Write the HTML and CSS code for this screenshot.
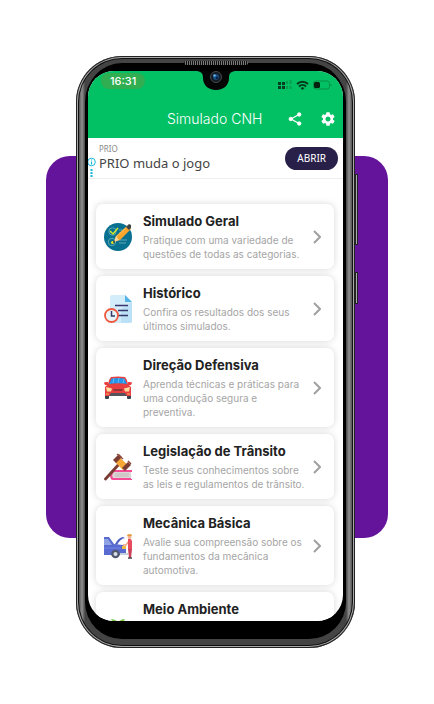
FILE: index.html
```
<!DOCTYPE html>
<html lang="pt-BR">
<head>
    <meta charset="UTF-8">
    <meta name="viewport" content="width=device-width, initial-scale=1.0">
    <title>Simulado CNH</title>
    <link rel="stylesheet" href="styles.css">
</head>
<body>
    <div class="stage">
        <div class="backdrop"></div>
        <div class="phone">
            <span class="speaker"></span>
            <span class="side-key volume"></span>
            <span class="side-key power"></span>
            <div class="bezel">
                <main class="screen">
                    <svg class="notch" viewBox="0 0 42 20">
                        <path d="M0 0C6 0 8 2 8 7C8 14 13 19 21 19S34 14 34 7C34 2 36 0 42 0Z" fill="#050505"/>
                        <circle cx="21" cy="6" r="5.5" fill="#141a22" stroke="#46494f"/>
                        <circle cx="21" cy="6" r="3" fill="#164b80"/>
                        <circle cx="19.5" cy="4.5" r="1.2" fill="#65b5ee"/>
                        <circle cx="22" cy="7" r="1" fill="#07101f"/>
                    </svg>

                    <header class="app-header">
                        <div class="status-bar">
                            <span class="time">16:31</span>
                            <svg class="status-icons" viewBox="0 0 54 12">
                                <g fill="#073d20">
                                    <rect y="2" width="3" height="3"/><rect x="4" y="2" width="3" height="3"/>
                                    <rect y="6" width="3" height="3"/><rect x="4" y="6" width="3" height="3"/>
                                </g>
                                <g fill="#0a9d50">
                                    <rect x="8" y="1" width="2" height="3"/><rect x="8" y="6" width="2" height="3"/>
                                    <rect x="11.5" y="0" width="2" height="4"/><rect x="11.5" y="6" width="2" height="3"/>
                                </g>
                                <g fill="none" stroke="#06391d" stroke-width="2">
                                    <path d="M19 4C22 1 27 1 30 4"/>
                                    <path d="M21 6.5C23 4.5 26 4.5 28 6.5"/>
                                </g>
                                <path d="M22.5 8Q24.5 6.5 26.5 8L24.5 10Z" fill="#06391d"/>
                                <rect x="35.5" y="1" width="16" height="8" rx="2.5" fill="none" stroke="#079048"/>
                                <rect x="36" y="2" width="6" height="6" rx="1.5" fill="#04210f"/>
                                <path d="M53 4v2" stroke="#079048"/>
                            </svg>
                        </div>
                        <div class="toolbar">
                            <h1>Simulado CNH</h1>
                            <button class="icon-button" type="button" aria-label="Compartilhar">
                                <svg viewBox="0 0 14 14" fill="#fff" stroke="#fff">
                                    <path d="M11 2.5L3 7L11 11.5" fill="none" stroke-width="1.3"/>
                                    <circle cx="11.2" cy="2.5" r="1.7"/><circle cx="2.8" cy="7" r="1.7"/><circle cx="11.2" cy="11.5" r="1.7"/>
                                </svg>
                            </button>
                            <button class="icon-button" type="button" aria-label="Configurações">
                                <svg viewBox="2 2 20 20" fill="#fff">
                                    <path d="M19.14 12.94c.04-.3.06-.61.06-.94s-.02-.64-.07-.94l2.03-1.58c.18-.14.23-.41.12-.61l-1.92-3.32c-.12-.22-.37-.29-.59-.22l-2.39.96c-.5-.38-1.03-.7-1.62-.94l-.36-2.54c-.04-.24-.24-.41-.48-.41h-3.84c-.24 0-.43.17-.47.41l-.36 2.54c-.59.24-1.13.57-1.62.94l-2.39-.96c-.22-.08-.47 0-.59.22L2.74 8.87c-.12.21-.08.47.12.61l2.03 1.58c-.05.3-.09.63-.09.94s.02.64.07.94l-2.03 1.58c-.18.14-.23.41-.12.61l1.92 3.32c.12.22.37.29.59.22l2.39-.96c.5.38 1.03.7 1.62.94l.36 2.54c.05.24.24.41.48.41h3.84c.24 0 .44-.17.47-.41l.36-2.54c.59-.24 1.13-.56 1.62-.94l2.39.96c.22.08.47 0 .59-.22l1.92-3.32c.12-.22.07-.47-.12-.61l-2.01-1.58zM12 15.6c-1.98 0-3.6-1.62-3.6-3.6s1.62-3.6 3.6-3.6 3.6 1.62 3.6 3.6-1.62 3.6-3.6 3.6z"/>
                                </svg>
                            </button>
                        </div>
                    </header>

                    <section class="ad">
                        <svg class="ad-info" viewBox="0 0 8 20" fill="none" stroke="#18b5d8">
                            <circle cx="3.5" cy="5" r="3.8"/>
                            <path d="M3.5 4.5v3M3.5 2.5v1" stroke-width="1.2"/>
                            <path d="M3.5 12v2M3.5 15v2M3.5 18v2" stroke-width="2"/>
                        </svg>
                        <div class="ad-text">
                            <p class="ad-brand">PRIO</p>
                            <p class="ad-title">PRIO muda o jogo</p>
                        </div>
                        <button class="ad-button" type="button">ABRIR</button>
                    </section>

                    <nav class="menu">
                        <a class="card" href="#simulado">
                            <svg class="card-icon" viewBox="0 0 28 28">
                                <circle cx="14" cy="14" r="14" fill="#08718f"/>
                                <g fill="none" stroke="#5aa6b5">
                                    <circle cx="8.5" cy="8.5" r="3.7"/><circle cx="8" cy="19" r="3.7"/>
                                    <path d="M15 7h7M15 10h4M15 17h8M15 20h7"/>
                                </g>
                                <path d="M6 8l3 3 5-6" fill="none" stroke="#d5e926" stroke-width="1.5"/>
                                <circle cx="8.5" cy="19.5" r="1.5" fill="#e2de2b"/>
                                <path d="M10 19L12 13L23 3L27 6L16 17Z" fill="#f9a42b"/>
                                <path d="M12 14L24 3" stroke="#ffc75c"/>
                                <path d="M10 19L12 13L15 17Z" fill="#f8d8a0"/>
                                <path d="M22 4L25 1L27 2V5L25 7Z" fill="#3d4245"/>
                                <path d="M9 20l2-1-1-2z" fill="#263238"/>
                            </svg>
                            <div class="card-text">
                                <h2>Simulado Geral</h2>
                                <p>Pratique com uma variedade de questões de todas as categorias.</p>
                            </div>
                            <svg class="chevron" viewBox="0 0 8 14"><path d="M1 1l6 6-6 6"/></svg>
                        </a>

                        <a class="card" href="#historico">
                            <svg class="card-icon" viewBox="0 0 28 28">
                                <path d="M8 0h13l7 7v19a2 2 0 0 1-2 2H8a2 2 0 0 1-2-2V2a2 2 0 0 1 2-2z" fill="#d4edfb"/>
                                <path d="M17 14l11-7v19a2 2 0 0 1-2 2H17z" fill="#bce0f5"/>
                                <path d="M21 0l7 7h-7z" fill="#55b4e5"/>
                                <path d="M11 10.5h13M14 15.5h10M14 20.5h10" stroke="#36376b" stroke-width="1.5"/>
                                <circle cx="7.5" cy="20.5" r="6.5" fill="#e7f5fc" stroke="#f0593e" stroke-width="1.8"/>
                                <path d="M7.5 16v5h3.5" fill="none" stroke="#34386a" stroke-width="1.5"/>
                            </svg>
                            <div class="card-text">
                                <h2>Histórico</h2>
                                <p>Confira os resultados dos seus últimos simulados.</p>
                            </div>
                            <svg class="chevron" viewBox="0 0 8 14"><path d="M1 1l6 6-6 6"/></svg>
                        </a>

                        <a class="card" href="#direcao">
                            <svg class="card-icon" viewBox="0 0 28 28">
                                <path d="M1 19h4v5a1 1 0 0 1-1 1H2a1 1 0 0 1-1-1zM23 19h4v5a1 1 0 0 1-1 1h-2a1 1 0 0 1-1-1z" fill="#38434d"/>
                                <path d="M7 3Q14 2 21 3Q23 5 24 10L27 13V22H1V13L4 10Q5 5 7 3Z" fill="#e93f40"/>
                                <path d="M0 9q0-1 2-1h2v3H1zM28 9q0-1-2-1h-2v3h3z" fill="#e93f40"/>
                                <path d="M7.5 4.5Q14 3.5 20.5 4.5L23 10Q14 8.5 5 10Z" fill="#2196eb"/>
                                <path d="M10 4l-1 5M15 4l-1 5M20 5l-1 4" stroke="#68b9f1"/>
                                <path d="M2 13l6 1.5-1 3H3zM26 13l-6 1.5 1 3h4z" fill="#ffe0a0"/>
                                <path d="M9 15h10l-1 2h-8z" fill="#8e383b"/>
                                <path d="M7 19h14l2 3H5z" fill="#55535b"/>
                                <path d="M2 20h3M23 20h3" stroke="#f1b657"/>
                            </svg>
                            <div class="card-text">
                                <h2>Direção Defensiva</h2>
                                <p>Aprenda técnicas e práticas para uma condução segura e preventiva.</p>
                            </div>
                            <svg class="chevron" viewBox="0 0 8 14"><path d="M1 1l6 6-6 6"/></svg>
                        </a>

                        <a class="card" href="#legislacao">
                            <svg class="card-icon" viewBox="0 0 28 28">
                                <path d="M10 17H28v2h-1v7h1v1H9q-3 0-3-5t4-5z" fill="#f64996"/>
                                <path d="M10 19h17v6H9q-2-3 1-6z" fill="#ddd5d5"/>
                                <path d="M11 21h14M11 23h14" stroke="#c2baba"/>
                                <path d="M1.5 26L16 10" stroke="#793d34" stroke-width="2.8" stroke-linecap="round"/>
                                <path d="M15 4L24 12L19 17L11 9Z" fill="#f6a735"/>
                                <path d="M15 1L18 4L12 10L9 7Z" fill="#793d34"/>
                                <path d="M24 9L27 12L21 18L18 15Z" fill="#793d34"/>
                                <path d="M13 1l6 5M24 8l3 3" stroke="#934a3d" stroke-width="1.5"/>
                            </svg>
                            <div class="card-text">
                                <h2>Legislação de Trânsito</h2>
                                <p>Teste seus conhecimentos sobre as leis e regulamentos de trânsito.</p>
                            </div>
                            <svg class="chevron" viewBox="0 0 8 14"><path d="M1 1l6 6-6 6"/></svg>
                        </a>

                        <a class="card" href="#mecanica">
                            <svg class="card-icon" viewBox="0 0 28 28">
                                <path d="M0 5h5l5 7 9 1 3 3v7H0z" fill="#596bd0"/>
                                <path d="M0 7h4l4 6H0z" fill="#8fa3e4"/>
                                <path d="M11 12q3-6 8-7l2 1q-5 1-8 7z" fill="#5162c4"/>
                                <path d="M0 16h17" stroke="#7385e6"/>
                                <path d="M18 14h4v3h-4z" fill="#f0bd42"/>
                                <path d="M16 21h8v2h-8z" fill="#c6d0dd"/>
                                <circle cx="11.5" cy="22" r="4.3" fill="#52596e"/><circle cx="11.5" cy="22" r="2" fill="#d6dee8"/>
                                <path d="M25 9l-3 4h-3" fill="none" stroke="#f1a183" stroke-width="1.5"/>
                                <path d="M24 7q3-1 4 2v9h-4z" fill="#e84b5b"/>
                                <path d="M24 17h4l-1 9h-2z" fill="#ca4056"/>
                                <circle cx="25.5" cy="5" r="2" fill="#f3b18e"/>
                                <path d="M23 4q0-2 3-2 2 0 2 2z" fill="#e59c38"/>
                                <path d="M24 26h4" stroke="#4b4654" stroke-width="1.5"/>
                            </svg>
                            <div class="card-text">
                                <h2>Mecânica Básica</h2>
                                <p>Avalie sua compreensão sobre os fundamentos da mecânica automotiva.</p>
                            </div>
                            <svg class="chevron" viewBox="0 0 8 14"><path d="M1 1l6 6-6 6"/></svg>
                        </a>

                        <a class="card card-last" href="#ambiente">
                            <svg class="card-icon" viewBox="0 0 28 28">
                                <circle cx="14" cy="17" r="11" fill="#3aa5dc"/>
                                <path d="M14 4Q11 1 7 1Q9 6 14 5Q19 6 21 1Q17 1 14 4Z" fill="#79c943"/>
                                <path d="M14 5v9" stroke="#248a4b" stroke-width="2"/>
                            </svg>
                            <div class="card-text">
                                <h2>Meio Ambiente</h2>
                            </div>
                            <svg class="chevron" viewBox="0 0 8 14"><path d="M1 1l6 6-6 6"/></svg>
                        </a>
                    </nav>
                </main>
            </div>
        </div>
    </div>
</body>
</html>
```

FILE: styles.css
```
* {
    margin: 0;
    padding: 0;
    box-sizing: border-box;
}

body {
    background: #fff;
    font-family: Inter, "Liberation Sans", sans-serif;
}

/* phone and purple panel share one grid cell */
.stage {
    display: grid;
    max-width: 434px;
    margin: 0 auto;
    padding: 56px 46px;
}

.backdrop,
.phone {
    grid-area: 1 / 1;
}

.backdrop {
    margin: 100px 0 110px;
    border-radius: 24px;
    background: #64149b;
}

.phone {
    position: relative;
    margin: 0 33px 0 30px;
    padding: 3px;
    border-radius: 46px;
    background: #111;
    box-shadow: inset 0 0 0 1px #222, inset 0 0 0 2px #aaa;
}

.bezel {
    padding: 8px 3px 18px;
    border: 6px solid transparent;
    border-top-width: 4px;
    border-radius: 43px;
    background:
        linear-gradient(#000, #000) padding-box,
        linear-gradient(90deg, #555, #909090 3px, #444 6px, #444 calc(100% - 6px), #909090 calc(100% - 3px), #555) border-box;
}

.speaker {
    position: absolute;
    top: 5px;
    left: 50%;
    width: 64px;
    height: 4px;
    border-radius: 2px;
    background: repeating-linear-gradient(90deg, #111 0 1px, #777 1px 2px);
    transform: translateX(-50%);
}

.side-key {
    position: absolute;
    right: -3px;
    width: 3px;
    border: 1px solid #222;
    background: #aaa;
}

.volume {
    top: 118px;
    height: 71px;
}

.power {
    top: 216px;
    height: 32px;
}

.screen {
    position: relative;
    overflow: hidden;
    aspect-ratio: 255 / 550;
    border-radius: 26px;
    background: #fff;
}

.notch {
    position: absolute;
    top: 0;
    left: 50%;
    width: 42px;
    height: 20px;
    transform: translateX(-50%);
}

.app-header {
    background: #02c064;
    color: #fff;
}

.status-bar {
    display: flex;
    justify-content: space-between;
    align-items: flex-start;
    height: 28px;
    padding: 2px 11px 0 13px;
}

.time {
    padding: 0 9px;
    border-radius: 8px;
    background: #30ae51;
    font-size: 11px;
    font-weight: 500;
    line-height: 16px;
}

.status-icons {
    width: 54px;
    height: 12px;
    margin-top: 7px;
}

.toolbar {
    display: flex;
    align-items: center;
    height: 39px;
    padding-right: 8px;
}

.toolbar h1 {
    flex: 1;
    padding-left: 79px;
    font-size: 14px;
    font-weight: 300;
    white-space: nowrap;
}

.icon-button {
    display: flex;
    margin-left: 19px;
    border: none;
    background: none;
    cursor: pointer;
}

.icon-button svg {
    width: 14px;
    height: 14px;
}

.ad {
    display: flex;
    align-items: center;
    height: 41px;
    padding-right: 5px;
    border-bottom: 1px solid #eee;
    font-family: "Noto Sans", "Open Sans", sans-serif;
}

.ad-info {
    align-self: flex-end;
    width: 8px;
    height: 20px;
    margin-bottom: 1px;
}

.ad-text {
    flex: 1;
    padding-left: 3px;
}

.ad-brand {
    color: #888;
    font-size: 8px;
    line-height: 10px;
}

.ad-title {
    color: #444;
    font-size: 13px;
    line-height: 18px;
}

.ad-button {
    height: 23px;
    padding: 0 12px;
    border: none;
    border-radius: 12px;
    background: #292049;
    color: #fff;
    font-family: inherit;
    font-size: 10px;
    cursor: pointer;
}

.menu {
    display: flex;
    flex-direction: column;
    gap: 7px;
    padding: 25px 9px 7px 8px;
}

.card {
    display: flex;
    align-items: center;
    padding: 8px 13px 8px 8px;
    border-radius: 7px;
    background: #fff;
    box-shadow: 0 0 7px rgba(0, 0, 0, 0.16);
    color: #222;
    text-decoration: none;
}

.card-icon {
    flex: none;
    width: 28px;
    height: 28px;
}

.card-text {
    flex: 1;
    align-self: flex-start;
    min-width: 0;
    padding: 0 5px 0 11px;
}

.card h2 {
    margin-bottom: 3px;
    font-size: 13px;
    font-weight: 700;
    line-height: 18px;
}

.card p {
    color: #a5a5a5;
    font-size: 10px;
    line-height: 14px;
}

.card-last {
    min-height: 79px;
}

.chevron {
    flex: none;
    width: 8px;
    height: 14px;
    fill: none;
    stroke: #a0a0a0;
    stroke-width: 2;
}
```
